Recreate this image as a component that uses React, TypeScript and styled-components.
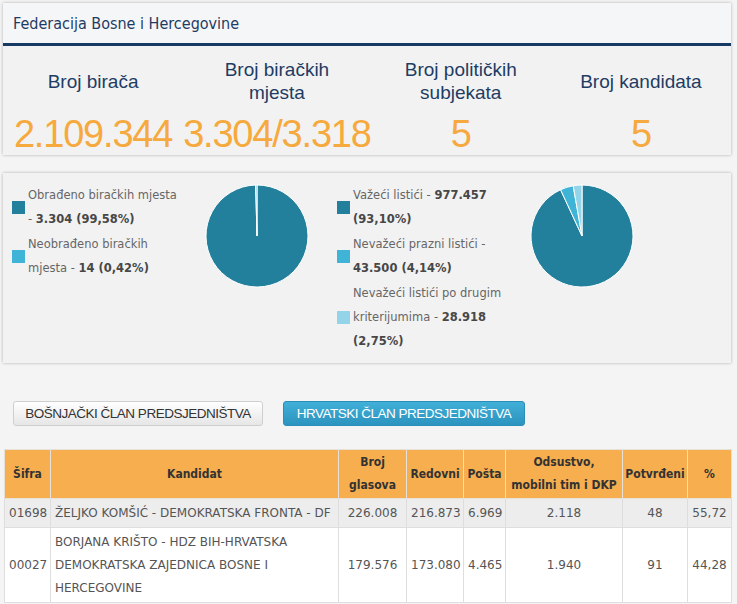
import React from "react";
import styled, { createGlobalStyle } from "styled-components";

const GlobalStyle = createGlobalStyle`
  html, body {
    margin: 0;
    padding: 0;
    background: #f4f4f4;
  }
  body {
    font-family: "DejaVu Sans", sans-serif;
    color: #555;
  }
`;

const Page = styled.div`
  width: 737px;
  padding: 3px 6px 0 3px;
  box-sizing: border-box;
`;

const Panel = styled.section`
  background: #f2f2f2;
  box-shadow: 0 0 3px rgba(0, 0, 0, 0.28);
`;

const PanelHeader = styled.header`
  height: 40px;
  display: flex;
  align-items: center;
  padding: 0 10px;
  background: #f5f6f8;
  border-bottom: 3px solid #163a63;
  font-family: "DejaVu Sans Condensed", sans-serif;
  font-size: 16px;
  color: #1f3b63;
`;

const StatsGrid = styled.div`
  display: grid;
  grid-template-columns: repeat(4, 1fr);
  height: 109px;
`;

const Stat = styled.div`
  display: grid;
  grid-template-rows: 62px 1fr;
  justify-items: center;
  text-align: center;
  font-family: "Liberation Sans", Arial, sans-serif;
`;

const StatLabel = styled.div`
  align-self: center;
  padding-top: 8px;
  font-size: 19px;
  line-height: 23px;
  color: #1e3c64;
`;

const StatValue = styled.div`
  padding-top: 6px;
  font-size: 38px;
  line-height: 40px;
  letter-spacing: -1.2px;
  color: #f6a93d;
`;

const ChartsPanel = styled(Panel)`
  margin-top: 18px;
  height: 190px;
  display: flex;
  padding: 10px 0 0 9px;
  box-sizing: border-box;
`;

const ChartBlock = styled.div`
  width: 325px;
  display: flex;
  align-items: flex-start;
`;

const Legend = styled.ul`
  list-style: none;
  margin: 0;
  padding: 0;
  width: 182px;
  display: flex;
  flex-direction: column;
  gap: 1px;
`;

const LegendItem = styled.li`
  display: flex;
  align-items: center;
  gap: 3px;
  font-size: 11.5px;
  line-height: 24px;
  color: #666;

  b {
    color: #474747;
  }
`;

const Swatch = styled.span<{ $color: string }>`
  flex: none;
  width: 13px;
  height: 13px;
  background: ${({ $color }) => $color};
`;

const LegendText = styled.span`
  width: 152px;
`;

const PieBox = styled.div`
  margin-left: 11px;
  margin-top: 1px;
`;

const Tabs = styled.div`
  display: flex;
  gap: 20px;
  margin: 38px 0 0 10px;
`;

const TabButton = styled.button<{ $active?: boolean }>`
  height: 25px;
  padding: 0;
  border-radius: 3px;
  font-family: "Liberation Sans", Arial, sans-serif;
  font-size: 13.5px;
  letter-spacing: -0.5px;
  white-space: nowrap;
  cursor: pointer;
  ${({ $active }) =>
    $active
      ? `
    width: 242px;
    color: #fff;
    border: 1px solid #2a8fb8;
    background: linear-gradient(#41b0d8, #2b93bf);
  `
      : `
    width: 250px;
    color: #333;
    border: 1px solid #cfcfcf;
    background: linear-gradient(#ffffff, #e6e6e6);
  `}
`;

const Table = styled.table`
  margin: 23px 0 0 1px;
  width: 727px;
  border-collapse: collapse;
  table-layout: fixed;
  font-size: 12px;
`;

const HeadCell = styled.th`
  background: #f7ae4e;
  color: #333;
  font-family: "DejaVu Sans Condensed", sans-serif;
  font-weight: bold;
  line-height: 23px;
  height: 48px;
  padding: 0 2px;
  border: 1px solid #e6e0d6;
  text-align: center;
`;

const Row = styled.tr<{ $shade?: boolean }>`
  background: ${({ $shade }) => ($shade ? "#ededed" : "#ffffff")};
`;

const Cell = styled.td<{ $left?: boolean }>`
  border: 1px solid #dedede;
  padding: 3px 4px 2px;
  line-height: 23px;
  text-align: ${({ $left }) => ($left ? "left" : "center")};
  color: #555;
  vertical-align: middle;
`;

type Slice = { value: number; color: string };

const Pie: React.FC<{ slices: Slice[] }> = ({ slices }) => {
  const r = 51;
  const c = 52;
  let acc = 0;
  const pt = (a: number) => {
    const t = a * 2 * Math.PI;
    return `${c + r * Math.sin(t)} ${c - r * Math.cos(t)}`;
  };
  return (
    <svg width={104} height={104} viewBox="0 0 104 104">
      {slices.map((s, i) => {
        const start = acc;
        acc += s.value;
        const large = s.value > 0.5 ? 1 : 0;
        return (
          <path
            key={i}
            d={`M${c} ${c} L${pt(start)} A${r} ${r} 0 ${large} 1 ${pt(acc)} Z`}
            fill={s.color}
            stroke="#fff"
            strokeWidth={1}
            strokeLinejoin="round"
          />
        );
      })}
    </svg>
  );
};

const DARK = "#23809c";
const MID = "#40b4d6";
const LIGHT = "#93d4e9";

const stats = [
  { label: ["Broj birača"], value: "2.109.344" },
  { label: ["Broj biračkih", "mjesta"], value: "3.304/3.318" },
  { label: ["Broj političkih", "subjekata"], value: "5" },
  { label: ["Broj kandidata"], value: "5" },
];

const rows = [
  {
    code: "01698",
    name: "ŽELJKO KOMŠIĆ - DEMOKRATSKA FRONTA - DF",
    total: "226.008",
    regular: "216.873",
    post: "6.969",
    absent: "2.118",
    confirmed: "48",
    pct: "55,72",
  },
  {
    code: "00027",
    name: "BORJANA KRIŠTO - HDZ BIH-HRVATSKA DEMOKRATSKA ZAJEDNICA BOSNE I HERCEGOVINE",
    total: "179.576",
    regular: "173.080",
    post: "4.465",
    absent: "1.940",
    confirmed: "91",
    pct: "44,28",
  },
];

export default function App() {
  return (
    <Page>
      <GlobalStyle />
      <Panel>
        <PanelHeader>Federacija Bosne i Hercegovine</PanelHeader>
        <StatsGrid>
          {stats.map((s) => (
            <Stat key={s.value + s.label[0]}>
              <StatLabel>
                {s.label.map((line, i) => (
                  <React.Fragment key={line}>
                    {i > 0 && <br />}
                    {line}
                  </React.Fragment>
                ))}
              </StatLabel>
              <StatValue>{s.value}</StatValue>
            </Stat>
          ))}
        </StatsGrid>
      </Panel>

      <ChartsPanel>
        <ChartBlock>
          <Legend>
            <LegendItem>
              <Swatch $color={DARK} />
              <LegendText>
                Obrađeno biračkih mjesta - <b>3.304 (99,58%)</b>
              </LegendText>
            </LegendItem>
            <LegendItem>
              <Swatch $color={MID} />
              <LegendText>
                Neobrađeno biračkih mjesta - <b>14 (0,42%)</b>
              </LegendText>
            </LegendItem>
          </Legend>
          <PieBox>
            <Pie
              slices={[
                { value: 0.9958, color: DARK },
                { value: 0.0042, color: MID },
              ]}
            />
          </PieBox>
        </ChartBlock>
        <ChartBlock>
          <Legend>
            <LegendItem>
              <Swatch $color={DARK} />
              <LegendText>
                Važeći listići - <b>977.457 (93,10%)</b>
              </LegendText>
            </LegendItem>
            <LegendItem>
              <Swatch $color={MID} />
              <LegendText>
                Nevažeći prazni listići - <b>43.500 (4,14%)</b>
              </LegendText>
            </LegendItem>
            <LegendItem>
              <Swatch $color={LIGHT} />
              <LegendText>
                Nevažeći listići po drugim kriterijumima - <b>28.918 (2,75%)</b>
              </LegendText>
            </LegendItem>
          </Legend>
          <PieBox>
            <Pie
              slices={[
                { value: 0.931, color: DARK },
                { value: 0.0414, color: MID },
                { value: 0.0276, color: LIGHT },
              ]}
            />
          </PieBox>
        </ChartBlock>
      </ChartsPanel>

      <Tabs>
        <TabButton>BOŠNJAČKI ČLAN PREDSJEDNIŠTVA</TabButton>
        <TabButton $active>HRVATSKI ČLAN PREDSJEDNIŠTVA</TabButton>
      </Tabs>

      <Table>
        <colgroup>
          <col style={{ width: 46 }} />
          <col style={{ width: 288 }} />
          <col style={{ width: 68 }} />
          <col style={{ width: 57 }} />
          <col style={{ width: 42 }} />
          <col style={{ width: 117 }} />
          <col style={{ width: 65 }} />
          <col style={{ width: 44 }} />
        </colgroup>
        <thead>
          <tr>
            <HeadCell>Šifra</HeadCell>
            <HeadCell>Kandidat</HeadCell>
            <HeadCell>
              Broj
              <br />
              glasova
            </HeadCell>
            <HeadCell>Redovni</HeadCell>
            <HeadCell>Pošta</HeadCell>
            <HeadCell>
              Odsustvo,
              <br />
              mobilni tim i DKP
            </HeadCell>
            <HeadCell>Potvrđeni</HeadCell>
            <HeadCell>%</HeadCell>
          </tr>
        </thead>
        <tbody>
          {rows.map((r, i) => (
            <Row key={r.code} $shade={i === 0}>
              <Cell>{r.code}</Cell>
              <Cell $left>{r.name}</Cell>
              <Cell>{r.total}</Cell>
              <Cell>{r.regular}</Cell>
              <Cell>{r.post}</Cell>
              <Cell>{r.absent}</Cell>
              <Cell>{r.confirmed}</Cell>
              <Cell>{r.pct}</Cell>
            </Row>
          ))}
        </tbody>
      </Table>
    </Page>
  );
}
